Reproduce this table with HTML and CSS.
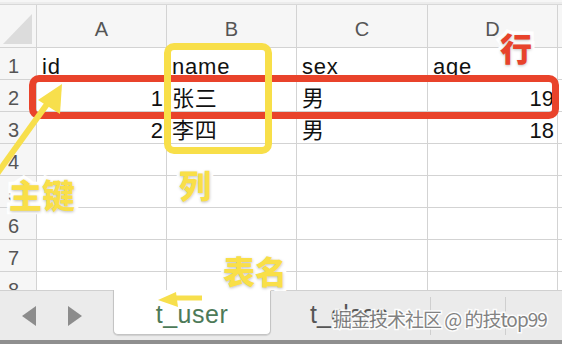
FILE: index.html
```html
<!DOCTYPE html>
<html lang="zh">
<head>
<meta charset="utf-8">
<link rel="stylesheet" href="styles.css">
</head>
<body>
<div class="app">
  <div class="sheet">
    <div class="topbar"></div>
    <div class="grid">
      <div class="corner"><span class="tri"></span></div>
      <div class="colh">A</div><div class="colh">B</div><div class="colh">C</div><div class="colh">D</div><div class="colh last"></div>

      <div class="rowh">1</div><div class="cell">id</div><div class="cell">name</div><div class="cell">sex</div><div class="cell">age</div><div class="cell last"></div>
      <div class="rowh">2</div><div class="cell num">1</div><div class="cell">张三</div><div class="cell">男</div><div class="cell num">19</div><div class="cell last"></div>
      <div class="rowh">3</div><div class="cell num">2</div><div class="cell">李四</div><div class="cell">男</div><div class="cell num">18</div><div class="cell last"></div>
      <div class="rowh">4</div><div class="cell"></div><div class="cell"></div><div class="cell"></div><div class="cell"></div><div class="cell last"></div>
      <div class="rowh">5</div><div class="cell"></div><div class="cell"></div><div class="cell"></div><div class="cell"></div><div class="cell last"></div>
      <div class="rowh">6</div><div class="cell"></div><div class="cell"></div><div class="cell"></div><div class="cell"></div><div class="cell last"></div>
      <div class="rowh">7</div><div class="cell"></div><div class="cell"></div><div class="cell"></div><div class="cell"></div><div class="cell last"></div>
      <div class="rowh">8</div><div class="cell"></div><div class="cell"></div><div class="cell"></div><div class="cell"></div><div class="cell last"></div>
    </div>
  </div>
  <div class="tabbar">
    <div class="nav">
      <span class="arrow left"></span>
      <span class="arrow right"></span>
    </div>
    <div class="tab active">t_user</div>
    <div class="tab other">t_class</div>
    <div class="sep s1"></div>
    <div class="sep s2"></div>
    <div class="watermark">掘金技术社区 @ 的技top99</div>
  </div>
  <div class="bottomline"></div>

  <div class="box red-box"></div>
  <div class="box yellow-box"></div>
  <svg class="arrows" width="562" height="344" viewBox="0 0 562 344">
    <path d="M-6 178 L50 100" stroke="#f7df4c" stroke-width="6" fill="none" stroke-linecap="butt"/>
    <path d="M62 84 L38 100 L60 114 Z" fill="#f7df4c"/>
    <path d="M202 298 L176 298" stroke="#f7df4c" stroke-width="5" fill="none"/>
    <path d="M158 300 L176 292 L178 307 Z" fill="#f7df4c"/>
  </svg>
  <div class="label red-label hang">行</div>
  <div class="label yel-label zhujian">主键</div>
  <div class="label yel-label lie">列</div>
  <div class="label yel-label biaoming">表名</div>
</div>
</body>
</html>
```
FILE: styles.css
```css
html, body {
  margin: 0;
  padding: 0;
  background: #ffffff;
}
.app {
  position: relative;
  width: 562px;
  height: 344px;
  overflow: hidden;
  font-family: "Liberation Sans", "Noto Sans CJK SC", sans-serif;
}
.sheet {
  height: 290px;
  overflow: hidden;
}
.topbar {
  height: 5px;
  box-sizing: border-box;
  background: #ececec;
  border-top: 2px solid #f6f6f6;
  border-bottom: 1px solid #d8d8d8;
}
.grid {
  display: grid;
  grid-template-columns: 37px 130px 130px 131px 130px 20px;
  grid-template-rows: 43px repeat(8, 32px);
}
.grid > div {
  box-sizing: border-box;
  border-right: 1px solid #d3d3d3;
  border-bottom: 1px solid #d3d3d3;
}
.grid > div.last {
  border-right: none;
}
.corner {
  background: #f6f6f6;
  position: relative;
}
.tri {
  position: absolute;
  left: 3px;
  top: 9px;
  width: 0;
  height: 0;
  border-left: 29px solid transparent;
  border-bottom: 30px solid #dcdcdc;
}
.colh {
  background: #f6f6f6;
  color: #555555;
  font-size: 20px;
  text-align: center;
  line-height: 44px;
  padding-top: 2px;
}
.rowh {
  background: #f6f6f6;
  color: #555555;
  font-size: 20px;
  text-align: center;
  padding-right: 9px;
  line-height: 36px;
}
.cell {
  font-size: 22px;
  letter-spacing: 0.8px;
  color: #111111;
  line-height: 38px;
  padding: 0 4px 0 5px;
  white-space: nowrap;
  overflow: hidden;
}
.cell.num {
  text-align: right;
  padding-right: 3px;
  letter-spacing: 0;
}
.tabbar {
  position: relative;
  height: 50px;
  background: #ebebeb;
  border-top: 1px solid #d0d0d0;
  box-sizing: border-box;
  display: flex;
  align-items: flex-start;
}
.nav {
  width: 113px;
  height: 100%;
  display: flex;
  align-items: center;
  gap: 32px;
  padding-left: 22px;
  box-sizing: border-box;
}
.arrow {
  width: 0;
  height: 0;
  border-top: 10px solid transparent;
  border-bottom: 10px solid transparent;
}
.arrow.left {
  border-right: 14px solid #8c8c8c;
}
.arrow.right {
  border-left: 14px solid #8c8c8c;
}
.tab {
  font-size: 25px;
  line-height: 44px;
}
.tab.active {
  margin-top: -1px;
  width: 158px;
  height: 45px;
  box-sizing: border-box;
  background: #ffffff;
  border: 1px solid #c4c4c4;
  border-top: none;
  border-radius: 0 0 5px 5px;
  color: #4d7a58;
  text-align: center;
  padding-top: 2px;
  letter-spacing: 0.5px;
  box-shadow: 0 1px 1px rgba(0,0,0,0.12);
}
.tab.other {
  margin-left: 39px;
  color: #555555;
  padding-top: 1px;
}
.sep {
  position: absolute;
  top: 6px;
  width: 1px;
  height: 38px;
  background: #cfcfcf;
}
.s1 { left: 430px; }
.s2 { left: 505px; }
.watermark {
  position: absolute;
  left: 333px;
  top: 14px;
  font-size: 19px;
  font-family: "Noto Sans CJK SC", sans-serif;
  color: #777777;
  -webkit-text-stroke: 3px #ffffff;
  paint-order: stroke fill;
  letter-spacing: -1px;
  white-space: nowrap;
  opacity: 0.9;
}
.bottomline {
  height: 4px;
  background: #8f8f8f;
}
.box {
  position: absolute;
  box-sizing: border-box;
  border-radius: 10px;
}
.red-box {
  left: 29px;
  top: 75px;
  width: 530px;
  height: 44px;
  border: 7px solid #e9432b;
}
.yellow-box {
  left: 164px;
  top: 43px;
  width: 108px;
  height: 111px;
  border: 7px solid #f8df49;
}
.arrows {
  position: absolute;
  left: 0;
  top: 0;
}
.label {
  position: absolute;
  font-family: "Noto Sans CJK SC", sans-serif;
  font-weight: 900;
  font-size: 32px;
  line-height: 1;
  -webkit-text-stroke: 7px #ffffff;
  paint-order: stroke fill;
  text-shadow: 0 1px 3px rgba(0,0,0,0.25);
  white-space: nowrap;
}
.red-label { color: #e8432b; }
.yel-label { color: #f9df48; }
.hang { left: 500px; top: 31px; }
.zhujian { left: 9px; top: 178px; font-size: 33px; }
.lie { left: 179px; top: 168px; }
.biaoming { left: 223px; top: 254px; }
```
